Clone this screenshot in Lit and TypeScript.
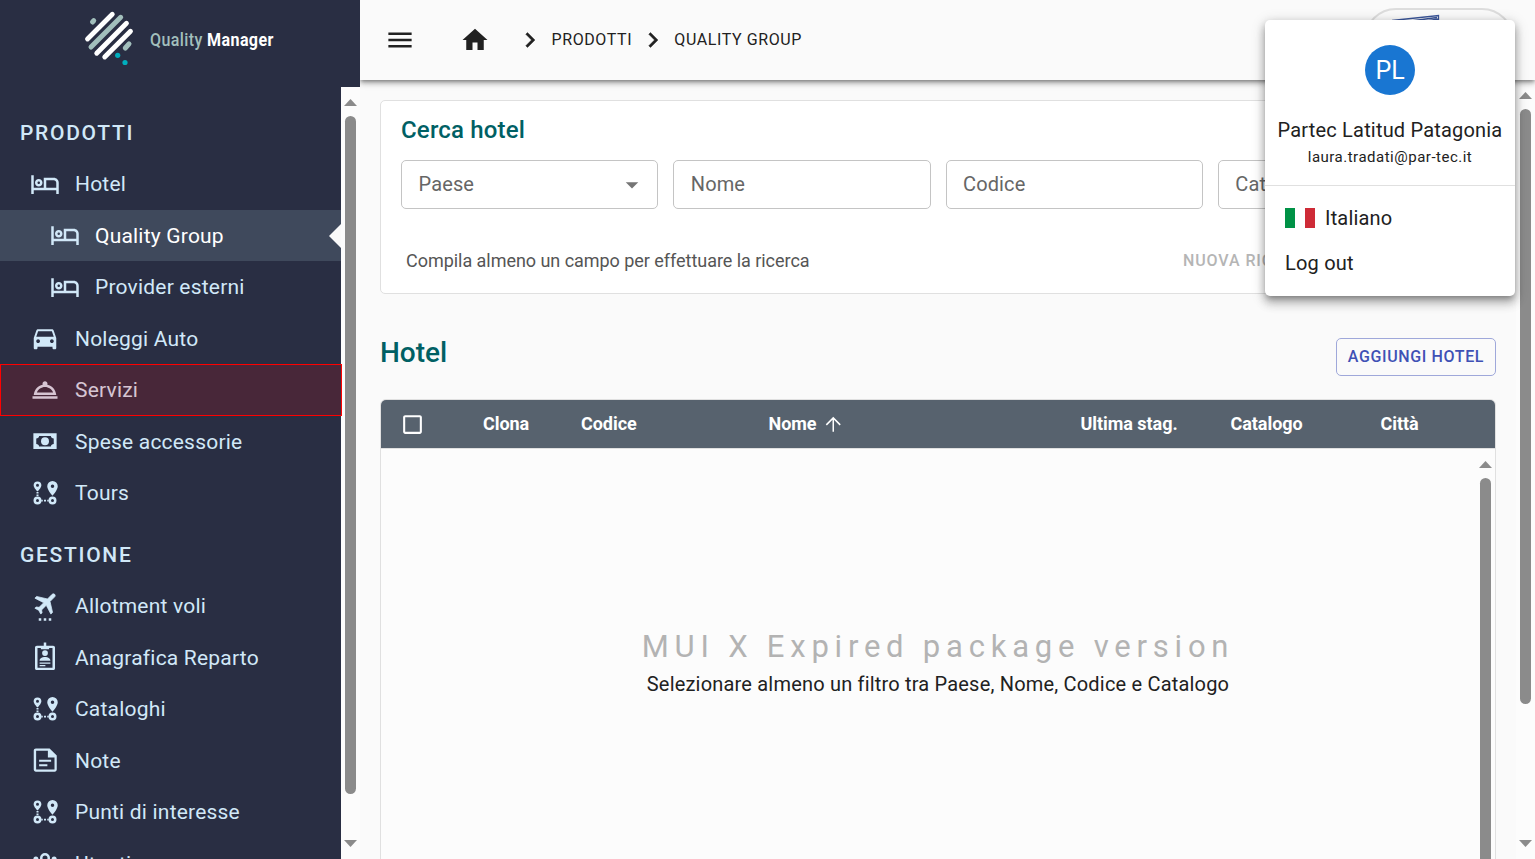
import { LitElement, html, css, svg } from "lit";
import { customElement } from "lit/decorators.js";
import { classMap } from "lit/directives/class-map.js";

const icons: Record<string, unknown> = {
  bed: svg`<path d="M7 14c1.66 0 3-1.34 3-3S8.66 8 7 8s-3 1.34-3 3 1.34 3 3 3zm0-4c.55 0 1 .45 1 1s-.45 1-1 1-1-.45-1-1 .45-1 1-1zm12-3h-8v8H3V5H1v15h2v-3h18v3h2v-9c0-2.21-1.79-4-4-4zm2 8h-8V9h6c1.1 0 2 .9 2 2v4z"/>`,
  car: svg`<path d="M18.92 6.01C18.72 5.42 18.16 5 17.5 5h-11c-.66 0-1.21.42-1.42 1.01L3 12v8c0 .55.45 1 1 1h1c.55 0 1-.45 1-1v-1h12v1c0 .55.45 1 1 1h1c.55 0 1-.45 1-1v-8l-2.08-5.99zM6.5 16c-.83 0-1.5-.67-1.5-1.5S5.67 13 6.5 13s1.5.67 1.5 1.5S7.33 16 6.5 16zm11 0c-.83 0-1.5-.67-1.5-1.5s.67-1.5 1.5-1.5 1.5.67 1.5 1.5-.67 1.5-1.5 1.5zM5 11l1.500-4.500h11L19 11H5z"/>`,
  service: svg`<path fill-rule="evenodd" d="M2 17h20v2H2zM13.84 7.79c.1-.24.16-.51.16-.79 0-1.1-.9-2-2-2s-2 .9-2 2c0 .28.06.55.16.79C6.25 8.6 3.27 11.93 3 16h18c-.27-4.07-3.25-7.4-7.16-8.21zM12 9.58c2.95 0 5.47 1.83 6.5 4.41h-13c1.03-2.58 3.55-4.41 6.5-4.41z"/>`,
  money: svg`<path fill-rule="evenodd" d="M2.7 5.8h18.6v12.6H2.7zM7.3 7.9C7.3 9.2 6.2 9.9 5 9.9v4.4c1.2 0 2.3.8 2.3 2h9.4c0-1.2 1.1-2 2.3-2V9.900c-1.200 0-2.300-.7-2.300-2z"/><circle cx="12" cy="12.1" r="3.2"/>`,
  route: svg`<path fill-rule="evenodd" d="M6 2.700a3.100 3.100 0 0 0-3.100 3.100c0 2.100 3.100 5 3.100 5s3.100-2.900 3.100-5A3.100 3.100 0 0 0 6 2.700zm0 1.900a1.200 1.200 0 1 1 0 2.400 1.200 1.200 0 0 1 0-2.400z"/>
    <path fill-rule="evenodd" d="M18 2.400a4.200 4.200 0 0 0-4.200 4.200c0 3.100 4.200 7.600 4.200 7.600s4.200-4.500 4.200-7.600A4.200 4.200 0 0 0 18 2.400zm0 2.800a1.400 1.400 0 1 1 0 2.800 1.400 1.400 0 0 1 0-2.800z"/>
    <path fill-rule="evenodd" d="M6 14.800a3.200 3.200 0 1 0 0 6.400 3.200 3.200 0 0 0 0-6.400zm0 2a1.200 1.200 0 1 1 0 2.400 1.200 1.200 0 0 1 0-2.400zM18 14.800a3.200 3.200 0 1 0 0 6.400 3.200 3.200 0 0 0 0-6.400zm0 2a1.200 1.200 0 1 1 0 2.400 1.200 1.200 0 0 1 0-2.400z"/>
    <path d="M5.200 11.100h1.600v1.300H5.200zM5.200 13.200h1.600v1.200H5.200zM9 17.300h1.200v1.500H9zM11.200 17.300h1.600v1.500h-1.600zM13.800 17.300H15v1.500h-1.200z"/>`,
  plane: svg`<path stroke="currentColor" stroke-width=".6" transform="translate(13 9.400) rotate(45) scale(.95) translate(-11.500 -12)" d="M21 16v-2l-8-5V3.500c0-.83-.67-1.500-1.500-1.500S10 2.670 10 3.500V9l-8 5v2l8-2.500V19l-2 1.500V22l3.500-1 3.500 1v-1.500L13 19v-5.500l8 2.500z"/><path d="M7 21.800h2v2H7zM11 21.800h2v2h-2zM15 21.800h2v2h-2z"/>`,
  badge: svg`<path transform="translate(0 -.7)" fill-rule="evenodd" d="M11 1h2v2.700h5.500c.8 0 1.500.6 1.500 1.300v16.800c0 .7-.7 1.300-1.500 1.300h-13c-.8 0-1.500-.6-1.500-1.300V5c0-.7.7-1.300 1.500-1.300H11zM6 5.500v15.800h12V5.500h-2.700v.9H8.700v-.9z"/><circle cx="12" cy="8.800" r="2.300"/><path d="M7.700 14.900c0-2 2-3 4.300-3s4.300 1 4.300 3zM7.700 16.300h8.600v1H7.700zM7.700 18.400h4.600v1H7.700z"/>`,
  note: svg`<path fill-rule="evenodd" d="M4.700 2.700h11l5.700 5.700v11.200c0 1-.7 1.700-1.700 1.700h-15c-1 0-1.700-.7-1.700-1.700V4.400c0-1 .7-1.700 1.700-1.700zM4.900 4.500v15h14.700V10h-5.300V4.500z"/><path d="M7.300 11.800h9.600v1.500H7.300zM7.300 15.400h6.600v1.500H7.300z"/>`,
  users: svg`<path fill-rule="evenodd" d="M12 4a4 4 0 1 0 0 8 4 4 0 0 0 0-8zm0 2a2 2 0 1 1 0 4 2 2 0 0 1 0-4z"/><circle cx="4.700" cy="8.700" r="2"/><circle cx="19.300" cy="8.700" r="2"/>`,
};

type Item = { icon: string; label: string; sub?: boolean; active?: boolean; marked?: boolean };
const groups: { title: string; items: Item[] }[] = [
  {
    title: "PRODOTTI",
    items: [
      { icon: "bed", label: "Hotel" },
      { icon: "bed", label: "Quality Group", sub: true, active: true },
      { icon: "bed", label: "Provider esterni", sub: true },
      { icon: "car", label: "Noleggi Auto" },
      { icon: "service", label: "Servizi", marked: true },
      { icon: "money", label: "Spese accessorie" },
      { icon: "route", label: "Tours" },
    ],
  },
  {
    title: "GESTIONE",
    items: [
      { icon: "plane", label: "Allotment voli" },
      { icon: "badge", label: "Anagrafica Reparto" },
      { icon: "route", label: "Cataloghi" },
      { icon: "note", label: "Note" },
      { icon: "route", label: "Punti di interesse" },
      { icon: "users", label: "Utenti" },
    ],
  },
];

@customElement("side-nav")
export class SideNav extends LitElement {
  static styles = css`
    :host { display: flex; flex-direction: column; width: 360px; height: 859px; overflow: hidden; background: #292e43; }
    .brand { display: flex; height: 87px; flex: none; padding-left: 80px; align-items: flex-start; }
    .brand svg { flex: none; display: block; }
    .name { margin: 29px 0 0 10px; font: 500 18.5px/22px "Roboto", sans-serif; color: #a2bfbc; white-space: nowrap; letter-spacing: .45px; transform: scaleX(.867); transform-origin: left; }
    .name b { font-weight: 700; color: #fff; }
    .body { display: flex; flex: 1; min-height: 0; }
    .list { width: 341px; flex: none; padding-top: 9.9px; box-sizing: border-box; }
    .group { padding-top: 10px; }
    .title { padding: 0 20px; font-weight: 500; letter-spacing: 1.7px; }
    .title, .item { display: flex; align-items: center; height: 51.5px; box-sizing: border-box; font-size: 21px; line-height: 31.5px; color: #d1e8f8; white-space: nowrap; }
    .title span, .item span { padding-top: 1.4px; }
    .item { gap: 15px; padding: 0 30px; letter-spacing: .2px; position: relative; }
    .item svg { width: 30px; height: 30px; fill: currentColor; flex: none; margin-top: -.6px; overflow: visible; }
    .sub { padding-left: 50px; }
    .active { background: #3f495c; }
    .active span { color: #fff; }
    .active::after { content: ""; position: absolute; right: 0; top: 14px; border: 12px solid transparent; border-left: 0; border-right-color: #fafafa; }
    .mark { position: absolute; inset: 0 -1px 0 0; border: 1px solid #f00; background: rgba(255, 0, 0, .15); }
  `;
  render() {
    return html`
      <div class="brand">
        <svg width="60" height="80" viewBox="80 0 60 80" stroke-linecap="round" stroke-width="4.800">
          <g stroke="#fff"><path d="M87.500 39L112.300 14.200M96.700 53.300L126.500 23.300M104.700 57L130.500 31.200"/></g>
          <g stroke="#a2bfbc"><path d="M91 47L120.700 17.300M92.500 22L93.700 20.700M125.300 48L129 43.800" stroke-width="5"/></g>
          <circle cx="117.700" cy="55.300" r="2.600" fill="#00aebd"/><circle cx="125" cy="62.500" r="2.600" fill="#00aebd"/>
        </svg>
        <div class="name">Quality <b>Manager</b></div>
      </div>
      <div class="body">
        <div class="list">
          ${groups.map((g) => html`<div class="group">
            <div class="title"><span>${g.title}</span></div>
            ${g.items.map((i) => html`<div class=${classMap({ item: true, sub: !!i.sub, active: !!i.active })}>
              <svg viewBox="0 0 24 24">${icons[i.icon]}</svg><span>${i.label}</span>
              ${i.marked ? html`<div class="mark"></div>` : ""}
            </div>`)}
          </div>`)}
        </div>
        <scroll-bar class="bar"></scroll-bar>
      </div>`;
  }
}

@customElement("scroll-bar")
export class ScrollBar extends LitElement {
  static styles = css`
    :host { display: flex; flex-direction: column; align-items: center; width: 19px; flex: none; background: #fcfcfc; box-sizing: border-box; padding: 12px 0 12px; }
    svg { display: block; fill: #8b8b8b; flex: none; }
    .thumb { width: 11px; background: #8b8b8b; border-radius: 6px; margin-top: 10px; flex: 0 0 var(--thumb, 678px); }
    .gap { flex: 1; }
  `;
  render() {
    return html`<svg width="13" height="7"><path d="M0 7L6.500 0L13 7z"/></svg><div class="thumb"></div><div class="gap"></div><svg width="13" height="7"><path d="M0 0H13L6.500 7z"/></svg>`;
  }
}

@customElement("top-bar")
export class TopBar extends LitElement {
  static styles = css`
    :host { display: flex; align-items: center; height: 80px; flex: none; background: #fafafa; box-sizing: border-box; padding: 0 21px 0 25px; position: relative; z-index: 1;
      box-shadow: 0 2px 4px -1px rgba(0,0,0,.4), 0 4px 5px rgba(0,0,0,.16), 0 1px 10px rgba(0,0,0,.14); clip-path: inset(0 0 -20px 0); }
    svg { fill: #212121; flex: none; display: block; }
    .home { margin-left: 45px; }
    .c1 { margin-left: 25px; }
    .c2 { margin-left: 5.700px; }
    .crumb { font-size: 16px; line-height: 24px; letter-spacing: .6px; margin-left: 6.500px; color: #212121; white-space: nowrap; }
    .agency { margin-left: auto; width: 150px; height: 64px; border: 2px solid #ddd; border-radius: 32px; box-sizing: border-box; display: flex; padding-left: 23px; }
    .agency svg { fill: none; }
  `;
  render() {
    const chev = (c: string) => html`<svg class=${c} width="30" height="30" viewBox="0 0 24 24"><path d="M8.590 16.590L13.170 12 8.590 7.410 10 6l6 6-6 6z" stroke="#212121" stroke-width=".3"/></svg>`;
    return html`
      <svg width="30" height="30" viewBox="0 0 24 24"><path d="M2.700 18h18.600v-2H2.700zm0-5h18.600v-2H2.700zm0-7v2h18.600V6z"/></svg>
      <svg class="home" width="30" height="30" viewBox="0 0 24 24"><path d="M10 20v-6h4v6h5v-8h3L12 3 2 12h3v8z"/></svg>
      ${chev("c1")}<span class="crumb">PRODOTTI</span>
      ${chev("c2")}<span class="crumb">QUALITY GROUP</span>
      <div class="agency"><svg width="60" height="40"><path d="M3 10.500L49.500 5.500V12M22 11L48 7.500M38 11L49 9" stroke="#3a5599" stroke-width="1.300"/></svg></div>`;
  }
}

@customElement("search-card")
export class SearchCard extends LitElement {
  static styles = css`
    :host { display: block; height: 194px; flex: none; box-sizing: border-box; padding: 14px 20px 0; border: 1px solid #e0e0e0; border-radius: 5px; background: #fff; }
    .head { font-size: 24px; font-weight: 500; line-height: 30px; color: #006064; letter-spacing: .18px; }
    .fields { display: grid; grid-template-columns: repeat(4, 1fr); gap: 15px; margin-top: 15px; }
    .field { display: flex; justify-content: space-between; align-items: center; height: 49px; box-sizing: border-box; padding: 0 10px 0 16.500px; border: 1px solid #c4c4c4; border-radius: 5px; font-size: 20px; color: #666; letter-spacing: .13px; }
    .field span { padding-bottom: 2px; }
    .foot { display: flex; justify-content: space-between; align-items: center; margin-top: 37px; padding: 0 5px; line-height: 30px; }
    .hint { font-size: 18px; color: #555; letter-spacing: -.04px; }
    .actions { font-size: 16px; font-weight: 500; letter-spacing: .9px; color: #b5b5b5; width: 287px; white-space: nowrap; }
  `;
  render() {
    return html`<div class="head">Cerca hotel</div>
      <div class="fields">
        <div class="field"><span>Paese</span><svg width="30" height="30" viewBox="0 0 24 24" fill="#757575"><path d="M7 9.700l5 5 5-5z"/></svg></div>
        <div class="field"><span>Nome</span></div><div class="field"><span>Codice</span></div><div class="field"><span>Catalogo</span></div>
      </div>
      <div class="foot"><span class="hint">Compila almeno un campo per effettuare la ricerca</span><div class="actions">NUOVA RICERCA</div></div>`;
  }
}

@customElement("hotel-grid")
export class HotelGrid extends LitElement {
  static styles = css`
    :host { display: flex; flex-direction: column; height: 500px; flex: none; box-sizing: border-box; border: 1px solid #e0e0e0; border-radius: 6px; overflow: hidden; background: #fcfcfc; }
    .cols { display: grid; grid-template-columns: 102px 98px 187.500px 312px 150px 150px 1fr; height: 48px; align-items: center; background: #57626e; color: #fff; font-size: 18px; font-weight: 700; letter-spacing: -.05px; border-bottom: 1px solid #e0e0e0; white-space: nowrap; flex: none; }
    .cols svg { fill: #fff; display: block; }
    .cols span { padding-bottom: 1px; }
    .box { margin-left: 19px; margin-top: 1px; }
    .sort { display: flex; align-items: center; gap: 6px; }
    .sort svg { margin-top: 2px; }
    .body { display: flex; flex: 1; }
    .empty { flex: 1; display: flex; flex-direction: column; align-items: center; padding-top: 178px; padding-left: 19px; }
    .mark { font-size: 31px; line-height: 40px; letter-spacing: 5.780px; color: #b3b3b3; white-space: nowrap; }
    .msg { font-size: 20px; line-height: 30px; margin-top: 2px; color: #212121; letter-spacing: .19px; }
    scroll-bar { --thumb: 600px; background: transparent; }
  `;
  render() {
    return html`<div class="cols">
        <svg class="box" width="25" height="25" viewBox="0 0 24 24"><path d="M19 5v14H5V5h14m0-2H5c-1.100 0-2 .9-2 2v14c0 1.100.9 2 2 2h14c1.100 0 2-.9 2-2V5c0-1.100-.9-2-2-2z"/></svg>
        <span>Clona</span><span>Codice</span>
        <span class="sort">Nome<svg width="22.500" height="22.500" viewBox="0 0 24 24"><path d="M4 12l1.200 1.200L11.200 7.100V20h1.600V7.100l6 6.100L20 12l-8-8-8 8z"/></svg></span>
        <span>Ultima stag.</span><span>Catalogo</span><span>Città</span>
      </div>
      <div class="body"><div class="empty"><div class="mark">MUI X Expired package version</div><div class="msg">Selezionare almeno un filtro tra Paese, Nome, Codice e Catalogo</div></div><scroll-bar></scroll-bar></div>`;
  }
}

@customElement("user-menu")
export class UserMenu extends LitElement {
  static styles = css`
    :host { display: flex; flex-direction: column; width: 250px; height: 276px; box-sizing: border-box; background: #fff; border-radius: 5px; color: #212121;
      box-shadow: 0 5px 5px -3px rgba(0,0,0,.2), 0 8px 10px 1px rgba(0,0,0,.14), 0 3px 14px 2px rgba(0,0,0,.12), 0 3px 8px rgba(0,0,0,.2); }
    .who { display: flex; flex-direction: column; align-items: center; height: 166px; box-sizing: border-box; padding-top: 25px; border-bottom: 1px solid #e0e0e0; white-space: nowrap; }
    .avatar { display: grid; place-items: center; width: 50px; height: 50px; border-radius: 50%; background: #1976d2; color: #fff; font-size: 25px; }
    .name { font-size: 20px; line-height: 30px; margin-top: 20px; letter-spacing: .19px; }
    .mail { font-size: 15px; line-height: 22px; margin-top: 1px; letter-spacing: .5px; }
    .row { display: flex; align-items: center; gap: 10px; height: 45px; padding-left: 20px; font-size: 20px; letter-spacing: .19px; }
    .lang { margin-top: 9px; }
    .flag { display: flex; width: 30px; height: 20px; }
    .flag i { flex: 1; }
    .g { background: #009246; }
    .w { background: #fff; }
    .r { background: #ce2b37; }
  `;
  render() {
    return html`<div class="who"><div class="avatar">PL</div><div class="name">Partec Latitud Patagonia</div><div class="mail">laura.tradati@par-tec.it</div></div>
      <div class="row lang"><div class="flag"><i class="g"></i><i class="w"></i><i class="r"></i></div>Italiano</div>
      <div class="row">Log out</div>`;
  }
}

@customElement("app-root")
export class AppRoot extends LitElement {
  static styles = css`
    :host { display: flex; width: 1535px; height: 859px; overflow: hidden; position: relative; background: #fafafa; font-family: "Roboto", sans-serif; }
    .main { display: flex; flex-direction: column; flex: 1; min-width: 0; }
    .scroll { display: flex; flex: 1; min-height: 0; }
    .page { flex: 1; display: flex; flex-direction: column; padding: 20px 20px 0; overflow: hidden; min-width: 0; }
    .heading { display: flex; justify-content: space-between; height: 105px; flex: none; }
    .title { font-size: 28px; font-weight: 500; line-height: 34px; margin-top: 42px; color: #006064; }
    .add { box-sizing: border-box; width: 160px; height: 38px; margin-top: 44px; border: 1px solid #9fa8da; border-radius: 5px; text-align: center; font-size: 16px; font-weight: 500; line-height: 36px; letter-spacing: .63px; color: #3f51b5; white-space: nowrap; }
    .bar { --thumb: 595px; }
    .menu { position: absolute; left: 1265px; top: 20px; z-index: 5; }
  `;
  render() {
    return html`<side-nav></side-nav>
      <div class="main">
        <top-bar></top-bar>
        <div class="scroll">
          <div class="page">
            <search-card></search-card>
            <div class="heading"><div class="title">Hotel</div><div class="add">AGGIUNGI HOTEL</div></div>
            <hotel-grid></hotel-grid>
          </div>
          <scroll-bar class="bar"></scroll-bar>
        </div>
      </div>
      <user-menu class="menu"></user-menu>`;
  }
}
